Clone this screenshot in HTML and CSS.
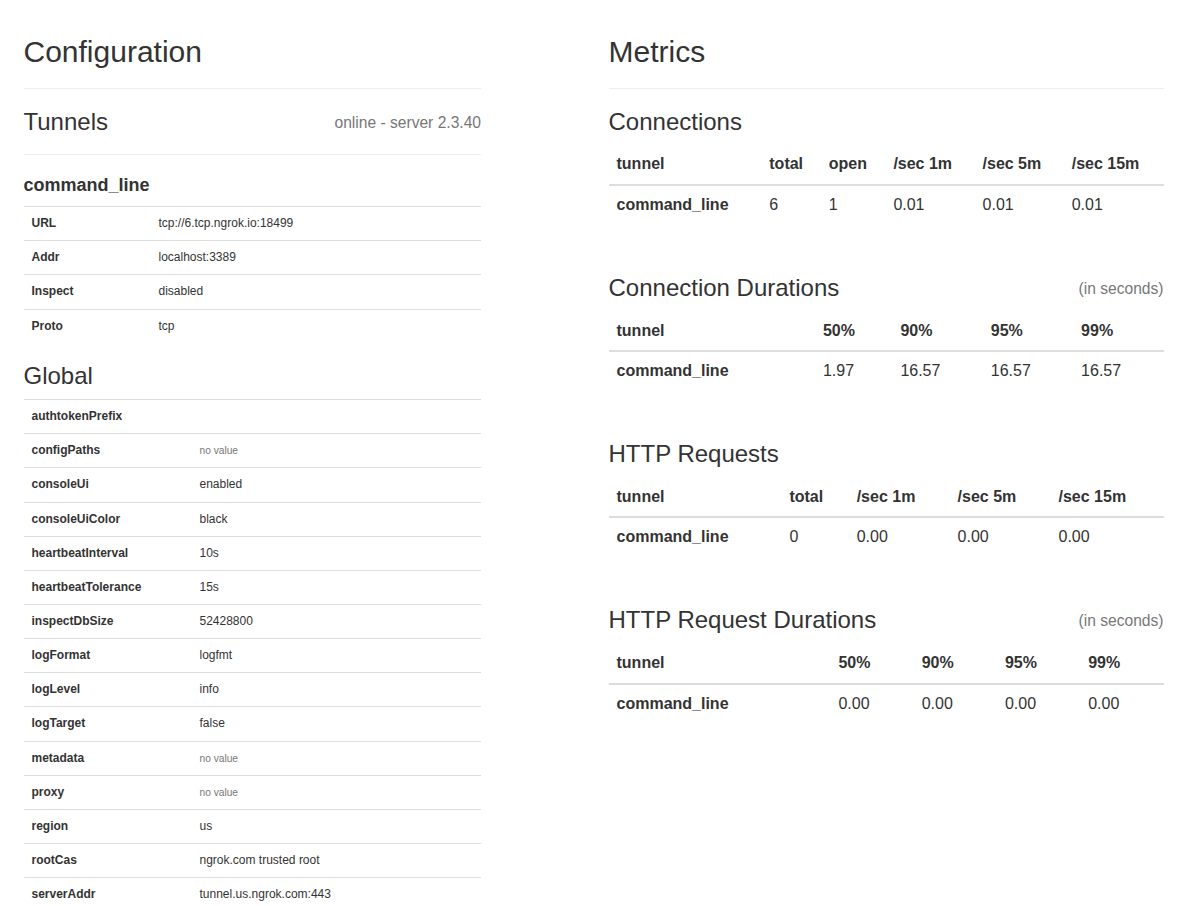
FILE: index.html
```html
<!DOCTYPE html>
<html lang="en">
<head>
<meta charset="utf-8">
<title>ngrok - Status</title>
<link rel="stylesheet" href="styles.css">
</head>
<body>
<div class="page">
  <div class="col-config">
    <div class="page-header"><h2>Configuration</h2></div>

    <div class="sub-header">
      <h3>Tunnels <small class="pull-right">online - server 2.3.40</small></h3>
    </div>

    <h4 class="tunnel-name">command_line</h4>
    <table class="table table-sm kv-tunnel">
      <tbody>
        <tr><th>URL</th><td>tcp://6.tcp.ngrok.io:18499</td></tr>
        <tr><th>Addr</th><td>localhost:3389</td></tr>
        <tr><th>Inspect</th><td>disabled</td></tr>
        <tr><th>Proto</th><td>tcp</td></tr>
      </tbody>
    </table>

    <h3 class="global-title">Global</h3>
    <table class="table table-sm kv-global">
      <tbody>
        <tr><th>authtokenPrefix</th><td></td></tr>
        <tr><th>configPaths</th><td><small class="muted">no value</small></td></tr>
        <tr><th>consoleUi</th><td>enabled</td></tr>
        <tr><th>consoleUiColor</th><td>black</td></tr>
        <tr><th>heartbeatInterval</th><td>10s</td></tr>
        <tr><th>heartbeatTolerance</th><td>15s</td></tr>
        <tr><th>inspectDbSize</th><td>52428800</td></tr>
        <tr><th>logFormat</th><td>logfmt</td></tr>
        <tr><th>logLevel</th><td>info</td></tr>
        <tr><th>logTarget</th><td>false</td></tr>
        <tr><th>metadata</th><td><small class="muted">no value</small></td></tr>
        <tr><th>proxy</th><td><small class="muted">no value</small></td></tr>
        <tr><th>region</th><td>us</td></tr>
        <tr><th>rootCas</th><td>ngrok.com trusted root</td></tr>
        <tr><th>serverAddr</th><td>tunnel.us.ngrok.com:443</td></tr>
      </tbody>
    </table>
  </div>

  <div class="col-metrics">
    <div class="page-header"><h2>Metrics</h2></div>

    <div class="metric-list">
      <section class="metric">
        <h3>Connections</h3>
        <table class="table">
          <thead>
            <tr><th>tunnel</th><th>total</th><th>open</th><th>/sec 1m</th><th>/sec 5m</th><th>/sec 15m</th></tr>
          </thead>
          <tbody>
            <tr><th>command_line</th><td>6</td><td>1</td><td>0.01</td><td>0.01</td><td>0.01</td></tr>
          </tbody>
        </table>
      </section>

      <section class="metric">
        <h3>Connection Durations <small class="pull-right">(in seconds)</small></h3>
        <table class="table">
          <thead>
            <tr><th>tunnel</th><th>50%</th><th>90%</th><th>95%</th><th>99%</th></tr>
          </thead>
          <tbody>
            <tr><th>command_line</th><td>1.97</td><td>16.57</td><td>16.57</td><td>16.57</td></tr>
          </tbody>
        </table>
      </section>

      <section class="metric">
        <h3>HTTP Requests</h3>
        <table class="table">
          <thead>
            <tr><th>tunnel</th><th>total</th><th>/sec 1m</th><th>/sec 5m</th><th>/sec 15m</th></tr>
          </thead>
          <tbody>
            <tr><th>command_line</th><td>0</td><td>0.00</td><td>0.00</td><td>0.00</td></tr>
          </tbody>
        </table>
      </section>

      <section class="metric">
        <h3>HTTP Request Durations <small class="pull-right">(in seconds)</small></h3>
        <table class="table">
          <thead>
            <tr><th>tunnel</th><th>50%</th><th>90%</th><th>95%</th><th>99%</th></tr>
          </thead>
          <tbody>
            <tr><th>command_line</th><td>0.00</td><td>0.00</td><td>0.00</td><td>0.00</td></tr>
          </tbody>
        </table>
      </section>
    </div>
  </div>
</div>
</body>
</html>
```

FILE: styles.css
```css
* {
  box-sizing: border-box;
}

html, body {
  margin: 0;
  padding: 0;
  background: #fff;
}

body {
  font-family: "Liberation Sans", Arial, Helvetica, sans-serif;
  font-size: 14px;
  line-height: 1.42857143;
  color: #333;
}

.page {
  width: 1140px;
  margin: 0 auto;
  display: flex;
  align-items: flex-start;
}

.col-config {
  width: 457.5px;
  flex: 0 0 457.5px;
}

.col-metrics {
  width: 555px;
  flex: 0 0 555px;
  margin-left: 127.5px;
}

h2, h3, h4 {
  font-family: inherit;
  font-weight: 500;
  line-height: 1.1;
  color: inherit;
}

.page-header {
  margin: 35px 0 0;
  padding-bottom: 10px;
  border-bottom: 1px solid #eee;
}

.page-header h2 {
  font-size: 30px;
  line-height: 33px;
  margin: 0 0 10px;
}

.sub-header {
  margin-top: 20px;
  padding-bottom: 9px;
  border-bottom: 1px solid #eee;
}

h3 {
  font-size: 24px;
  line-height: 26.4px;
  margin: 0 0 10px;
}

h3 small {
  font-size: 65%;
  font-weight: 400;
  line-height: 1;
  color: #777;
}

.pull-right {
  float: right;
  margin-top: 6px;
}

.tunnel-name {
  font-size: 18px;
  line-height: 19.8px;
  font-weight: 700;
  margin: 21px 0 10px;
}

.table {
  width: 100%;
  border-collapse: collapse;
  border-spacing: 0;
}

.table th,
.table td {
  padding: 8px;
  line-height: 1.42857143;
  vertical-align: top;
  text-align: left;
}

.table th {
  font-weight: 700;
}

.table-sm {
  font-size: 12px;
  margin-bottom: 20px;
}

.table-sm th,
.table-sm td {
  border-top: 1px solid #ddd;
}

.kv-tunnel th {
  width: 127px;
}

.kv-global th {
  width: 168px;
}

.muted {
  font-size: 85%;
  color: #777;
}

.global-title {
  margin-top: 20px;
}

.metric-list {
  display: flex;
  flex-direction: column;
  gap: 50px;
  margin-top: 20px;
}

.metric h3 {
  margin: 0 0 10px;
}

.metric .table {
  font-size: 16px;
}

.metric .table thead th {
  border-bottom: 2px solid #ddd;
  vertical-align: bottom;
}

.metric .table tbody td,
.metric .table tbody th {
  border-top: 1px solid #ddd;
}
```
